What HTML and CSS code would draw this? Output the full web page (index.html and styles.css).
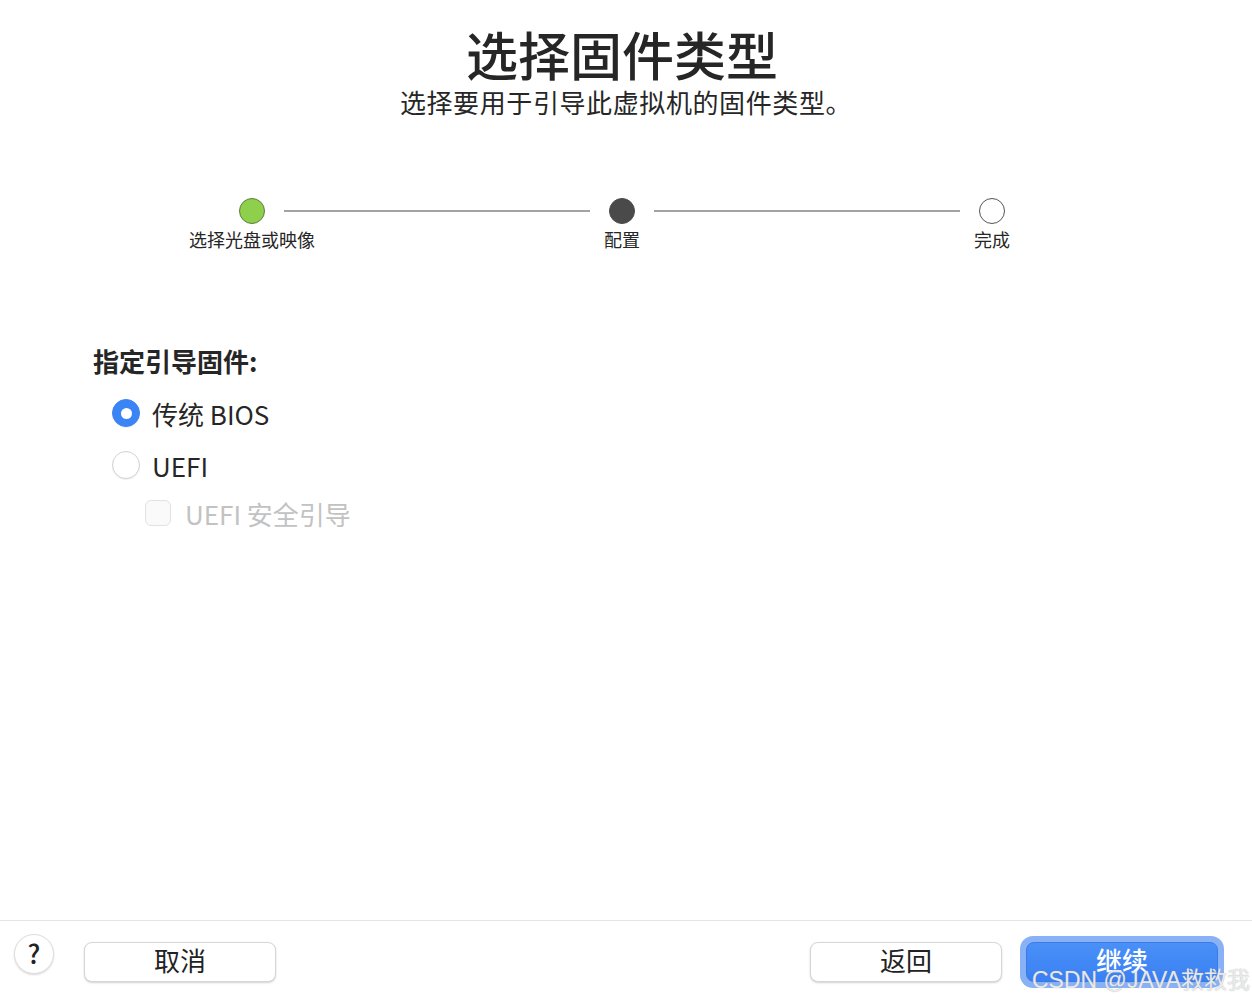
FILE: index.html
```html
<!DOCTYPE html>
<html lang="zh-CN">
<head>
  <meta charset="UTF-8" />
  <title>选择固件类型</title>
  <meta name="viewport" content="width=device-width, initial-scale=1.0" />
  <link rel="stylesheet" href="styles.css">
</head>
<body>
  <div class="page">
    <div class="header">
      <h1>选择固件类型</h1>
      <p class="subtitle">选择要用于引导此虚拟机的固件类型。</p>
    </div>

    <div class="steps">
      <div class="step">
        <span class="dot done"></span>
        <span class="step-label">选择光盘或映像</span>
      </div>
      <div class="line"></div>
      <div class="step">
        <span class="dot current"></span>
        <span class="step-label">配置</span>
      </div>
      <div class="line"></div>
      <div class="step">
        <span class="dot"></span>
        <span class="step-label">完成</span>
      </div>
    </div>

    <div class="form">
      <div class="form-title">指定引导固件:</div>
      <div class="options">
        <label class="option">
          <span class="radio checked"></span>
          <span>传统 BIOS</span>
        </label>
        <label class="option">
          <span class="radio"></span>
          <span>UEFI</span>
        </label>
        <label class="option sub disabled">
          <span class="checkbox"></span>
          <span>UEFI 安全引导</span>
        </label>
      </div>
    </div>
  </div>

  <div class="footer">
    <button class="help">?</button>
    <button class="btn">取消</button>
    <div class="spacer"></div>
    <button class="btn">返回</button>
    <div class="focus-ring">
      <button class="btn primary">继续</button>
    </div>
  </div>

  <div class="watermark">CSDN @JAVA救救我</div>
</body>
</html>
```

FILE: styles.css
```css
html, body {
  height: 100%;
}
body {
  margin: 0;
  background: #fff;
  color: #262626;
  font-family: "Noto Sans CJK SC", "Noto Sans", sans-serif;
  display: flex;
  flex-direction: column;
  position: relative;
  overflow: hidden;
}
.page {
  flex: 1;
}
.header {
  text-align: center;
  padding-top: 27px;
}
h1 {
  margin: 0 8px 0 0;
  font-size: 52px;
  font-weight: 500;
  line-height: 54px;
}
.subtitle {
  margin: 5px 0 0;
  font-size: 26px;
  line-height: 32px;
  letter-spacing: 0.6px;
}
.steps {
  display: flex;
  align-items: flex-start;
  margin: 80px 0 0 239px;
  width: 766px;
}
.step {
  width: 26px;
  display: flex;
  flex-direction: column;
  align-items: center;
}
.dot {
  width: 26px;
  height: 26px;
  box-sizing: border-box;
  border-radius: 50%;
  border: 1.5px solid #555;
  background: #fff;
}
.dot.done {
  background: #8ecf4c;
  border-color: #5d7d3d;
}
.dot.current {
  background: #4a4a4a;
  border-color: #4a4a4a;
}
.step-label {
  white-space: nowrap;
  font-size: 18px;
  line-height: 24px;
  margin-top: 3px;
}
.line {
  flex: 1;
  height: 2px;
  background: #a3a3a3;
  margin: 12px 19px 0;
}
.form {
  padding-left: 93px;
  margin-top: 93px;
}
.form-title {
  font-size: 26px;
  font-weight: 700;
  line-height: 34px;
}
.options {
  margin-top: 9px;
}
.option {
  display: flex;
  align-items: center;
  gap: 12px;
  height: 52px;
  padding-left: 19px;
  font-size: 26px;
}
.option.sub {
  padding-left: 52px;
  height: 44px;
  gap: 14px;
}
.disabled {
  color: #c2c2c2;
}
.radio {
  width: 28px;
  height: 28px;
  box-sizing: border-box;
  border-radius: 50%;
  border: 1px solid #d2d2d2;
  background: #fff;
  box-shadow: 0 1px 1px rgba(0, 0, 0, 0.06);
  display: flex;
  align-items: center;
  justify-content: center;
}
.radio.checked {
  background: #3b84f5;
  border-color: #3b84f5;
}
.radio.checked::after {
  content: "";
  width: 11px;
  height: 11px;
  border-radius: 50%;
  background: #fff;
}
.checkbox {
  width: 26px;
  height: 26px;
  box-sizing: border-box;
  border-radius: 6px;
  border: 1px solid #e2e2e2;
  background: #fafafa;
}
.footer {
  box-sizing: border-box;
  height: 82px;
  border-top: 1px solid #e4e4e4;
  display: flex;
  align-items: flex-start;
  padding: 13px 28px 0 14px;
}
button {
  font-family: inherit;
  color: #222;
  cursor: pointer;
}
.help {
  width: 40px;
  height: 40px;
  border-radius: 50%;
  border: 1px solid #dedede;
  background: #fff;
  box-shadow: 0 1px 2px rgba(0, 0, 0, 0.15);
  font-size: 26px;
  font-weight: 500;
  line-height: 1;
  padding: 0 0 3px;
  margin-right: 30px;
}
.btn {
  width: 192px;
  height: 40px;
  margin-top: 8px;
  border-radius: 8px;
  border: 1px solid #d6d6d6;
  background: #fff;
  box-shadow: 0 1px 2px rgba(0, 0, 0, 0.18);
  font-size: 26px;
  line-height: 1;
  padding: 0 0 5px;
}
.spacer {
  flex: 1;
}
.focus-ring {
  margin: 2px 0 0 18px;
  padding: 6px;
  border-radius: 13px;
  background: rgba(59, 125, 240, 0.6);
}
.btn.primary {
  margin-top: 0;
  display: block;
  color: #fff;
  border: 1px solid #3a7ae8;
  background: linear-gradient(#4a90f7, #3a80f3);
  box-shadow: none;
  font-weight: 500;
}
.watermark {
  position: absolute;
  right: 2px;
  bottom: 8px;
  font-family: "Liberation Sans", "Noto Sans CJK SC", sans-serif;
  font-size: 23px;
  line-height: 28px;
  color: rgba(255, 255, 255, 0.8);
  text-shadow: 0 0 1px #999;
}
```
